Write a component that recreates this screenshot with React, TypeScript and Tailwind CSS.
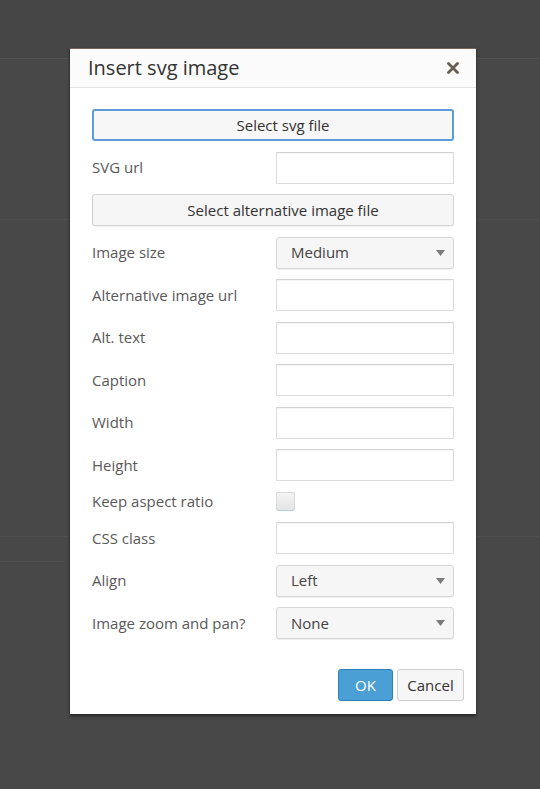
import React from "react";

const font = { fontFamily: '"Open Sans", "Noto Sans", sans-serif' };

function Arrow() {
  return (
    <svg width="9" height="6" viewBox="0 0 9 6" className="shrink-0">
      <path d="M0 0 L9 0 L4.5 6 Z" fill="#7a7a7a" />
    </svg>
  );
}

function Row({ label, children, h = "h-[32px]" }: { label: string; children: React.ReactNode; h?: string }) {
  return (
    <div className={`flex items-center ${h}`}>
      <div className="w-[184px] shrink-0 text-[15px] text-[#595959] leading-none">{label}</div>
      <div className="flex-1 h-full flex items-center">{children}</div>
    </div>
  );
}

function TextInput() {
  return (
    <div className="w-full h-full bg-white border border-[#dcdcdc] border-t-[#d2d2d2] rounded-[1px] shadow-[inset_0_1px_1px_rgba(0,0,0,0.04)]" />
  );
}

function Select({ value }: { value: string }) {
  return (
    <div className="w-full h-full flex items-center justify-between pl-[14px] pr-[8px] bg-[#f6f6f6] border border-[#d6d6d6] rounded-[3px] shadow-[0_1px_0_rgba(0,0,0,0.06)] text-[15px] text-[#444]">
      <span>{value}</span>
      <Arrow />
    </div>
  );
}

export default function App() {
  return (
    <div className="relative w-[540px] h-[789px] overflow-hidden bg-[#484848]" style={font}>
      {/* faint page content behind overlay */}
      <div className="flex flex-col">
        <div className="h-[59px] border-b border-[#515151] bg-[#464646]" />
        <div className="h-[161px] border-b border-[#4f4f4f]" />
        <div className="h-[317px] border-b border-[#4f4f4f]" />
        <div className="h-[25px] w-[64px] border-b border-[#4f4f4f]" />
      </div>

      {/* modal */}
      <div className="absolute left-[70px] top-[48px] w-[406px] bg-white border-t border-t-[#7a6658] shadow-[-1px_0_0_#333,0_2px_3px_rgba(0,0,0,0.5)]">
        <div className="h-[39px] flex items-center justify-between pl-[18px] pr-[17px] bg-[#fbfbfb] border-b border-[#e3e3e3]">
          <div className="text-[20px] text-[#333] leading-none pb-[1px]">Insert svg image</div>
          <svg width="12" height="12" viewBox="0 0 12 12" className="mt-[-1px]">
            <path d="M1.5 1.5 L10.5 10.5 M10.5 1.5 L1.5 10.5" stroke="#6a5c52" strokeWidth="2.8" strokeLinecap="round" />
          </svg>
        </div>

        <div className="flex flex-col gap-[10.5px] pl-[22px] pr-[22px] pt-[21px] pb-[20px]">
          <div className="h-[32px] flex items-center justify-center pl-[20px] bg-[#f7f7f7] border-2 border-[#5b9dd9] rounded-[3px] text-[15px] text-[#333]">
            Select svg file
          </div>
          <Row label="SVG url">
            <TextInput />
          </Row>
          <div className="h-[32px] flex items-center justify-center pl-[20px] bg-[#f6f6f6] border border-[#d4d4d4] rounded-[3px] shadow-[0_1px_0_rgba(0,0,0,0.05)] text-[15px] text-[#333]">
            Select alternative image file
          </div>
          <Row label="Image size">
            <Select value="Medium" />
          </Row>
          <Row label="Alternative image url">
            <TextInput />
          </Row>
          <Row label="Alt. text">
            <TextInput />
          </Row>
          <Row label="Caption">
            <TextInput />
          </Row>
          <Row label="Width">
            <TextInput />
          </Row>
          <Row label="Height">
            <TextInput />
          </Row>
          <Row label="Keep aspect ratio" h="h-[20px]">
            <div className="w-[19px] h-[19px] rounded-[2px] border border-[#d8d8d8] border-b-[#b9cfe0] bg-gradient-to-b from-[#f4f4f4] to-[#e4e4e4]" />
          </Row>
          <Row label="CSS class">
            <TextInput />
          </Row>
          <Row label="Align">
            <Select value="Left" />
          </Row>
          <Row label="Image zoom and pan?">
            <Select value="None" />
          </Row>
        </div>

        <div className="flex justify-end gap-[4px] pr-[12px] pt-[10px] pb-[13px]">
          <div className="w-[55px] h-[32px] flex items-center justify-center bg-[#4aa0d5] border border-[#2f7fb6] rounded-[3px] text-[15px] text-white">
            OK
          </div>
          <div className="w-[67px] h-[32px] flex items-center justify-center bg-[#f6f6f6] border border-[#cfcfcf] rounded-[3px] text-[15px] text-[#333]">
            Cancel
          </div>
        </div>
      </div>
    </div>
  );
}
